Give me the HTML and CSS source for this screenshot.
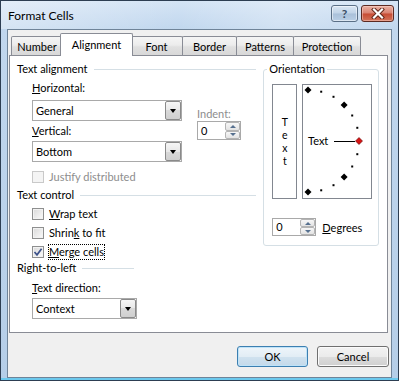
FILE: index.html
```html
<!DOCTYPE html>
<html lang="en">
<head>
    <meta charset="UTF-8">
    <meta name="viewport" content="width=device-width, initial-scale=1.0">
    <title>Format Cells</title>
    <link rel="stylesheet" href="styles.css">
</head>
<body>
    <div class="window">
        <div class="titlebar">
            <span class="title">Format Cells</span>
            <div class="caption-buttons">
                <button class="cap cap-help">?</button>
                <button class="cap cap-close">
                    <svg width="14" height="11" viewBox="0 0 14 11">
                        <path d="M3 1.5 L11 9.5 M11 1.5 L3 9.5" stroke="#5b2216" stroke-width="4" stroke-linecap="square"/>
                        <path d="M3 1.5 L11 9.5 M11 1.5 L3 9.5" stroke="#fff" stroke-width="2.2" stroke-linecap="square"/>
                    </svg>
                </button>
            </div>
        </div>

        <div class="client">
            <div class="tabs">
                <div class="tab tab-number">Number</div>
                <div class="tab tab-alignment active">Alignment</div>
                <div class="tab tab-font">Font</div>
                <div class="tab tab-border">Border</div>
                <div class="tab tab-patterns">Patterns</div>
                <div class="tab tab-protection">Protection</div>
            </div>

            <div class="panel">
                <div class="left-col">
                    <div class="group-head"><span>Text alignment</span><i class="rule"></i></div>

                    <div class="align-row">
                        <div class="align-fields">
                            <label class="field-label"><u>H</u>orizontal:</label>
                            <div class="combo combo-wide"><span class="combo-text">General</span><span class="drop"></span></div>
                            <label class="field-label gap-top"><u>V</u>ertical:</label>
                            <div class="combo combo-wide"><span class="combo-text">Bottom</span><span class="drop"></span></div>
                        </div>
                        <div class="indent">
                            <label class="field-label disabled">Indent:</label>
                            <div class="spin">
                                <span class="spin-text">0</span>
                                <span class="spin-btns"><span class="spin-up"></span><span class="spin-down"></span></span>
                            </div>
                        </div>
                    </div>

                    <div class="check disabled justify"><span class="box"></span><span>Justify distributed</span></div>

                    <div class="group-head control-head"><span>Text control</span><i class="rule"></i></div>
                    <div class="check first-check"><span class="box"></span><span><u>W</u>rap text</span></div>
                    <div class="check"><span class="box"></span><span>Shrin<u>k</u> to fit</span></div>
                    <div class="check">
                        <span class="box checked">
                            <svg width="10" height="10" viewBox="0 0 10 10"><path d="M1.5 5 L4 7.8 L8.6 1.8" fill="none" stroke="#3d528a" stroke-width="1.7"/></svg>
                        </span>
                        <span class="focus"><u>M</u>erge cells</span>
                    </div>

                    <div class="group-head rtl-head"><span>Right-to-left</span><i class="rule short"></i></div>
                    <label class="field-label sub dir-label"><u>T</u>ext direction:</label>
                    <div class="sub">
                        <div class="combo combo-narrow"><span class="combo-text">Context</span><span class="drop"></span></div>
                    </div>
                </div>

                <fieldset class="orientation">
                    <legend>Orientation</legend>
                    <div class="dials">
                        <div class="vertical-text">
                            <span>T</span><span>e</span><span>x</span><span>t</span>
                        </div>
                        <div class="dial">
                            <svg width="68" height="113" viewBox="0 0 68 113">
                                <g fill="#000">
                                    <polygon points="5,1.5 8.5,5 5,8.5 1.5,5"/>
                                    <rect x="17.2" y="5.7" width="2" height="2"/>
                                    <rect x="29.5" y="10.8" width="2" height="2"/>
                                    <polygon points="41.1,16.4 44.6,19.9 41.1,23.4 37.6,19.9"/>
                                    <rect x="48.2" y="29.5" width="2" height="2"/>
                                    <rect x="53.3" y="41.8" width="2" height="2"/>
                                    <rect x="53.3" y="68.2" width="2" height="2"/>
                                    <rect x="48.2" y="80.5" width="2" height="2"/>
                                    <polygon points="41.1,88.6 44.6,92.1 41.1,95.6 37.6,92.1"/>
                                    <rect x="29.5" y="99.2" width="2" height="2"/>
                                    <rect x="17.2" y="104.3" width="2" height="2"/>
                                    <polygon points="5,103.5 8.5,107 5,110.5 1.5,107"/>
                                </g>
                                <text x="5" y="60" class="dial-text">Text</text>
                                <line x1="31" y1="56.5" x2="52" y2="56.5" stroke="#000" stroke-width="1"/>
                                <polygon points="56,52.5 59.5,56 56,59.5 52.5,56" fill="#d81414" stroke="#5a0000" stroke-width="0.6"/>
                            </svg>
                        </div>
                    </div>
                    <div class="degrees">
                        <div class="spin">
                            <span class="spin-text">0</span>
                            <span class="spin-btns"><span class="spin-up"></span><span class="spin-down"></span></span>
                        </div>
                        <label class="degrees-label"><u>D</u>egrees</label>
                    </div>
                </fieldset>
            </div>

            <div class="actions">
                <button class="btn btn-default">OK</button>
                <button class="btn">Cancel</button>
            </div>
        </div>
    </div>
</body>
</html>
```

FILE: styles.css
```css
* {
    margin: 0;
    padding: 0;
    box-sizing: border-box;
}

body {
    font-family: Lato, "Noto Sans", sans-serif;
    font-size: 11px;
    color: #000;
    background: #fff;
}

/* window frame */
.window {
    width: 399px;
    height: 381px;
    display: flex;
    flex-direction: column;
    padding: 0 6px 2px;
    border: 1px solid #2d3e52;
    background:
        linear-gradient(#6cc9ee, #6cc9ee) bottom / 100% 2px no-repeat,
        linear-gradient(to bottom, #d4e4f5 0, #c1d7ee 28px, #b5cee8 100%);
}

.titlebar {
    height: 28px;
    display: flex;
    align-items: center;
    justify-content: space-between;
    margin: 0 -6px;
    padding: 0 4px 0 7px;
    background: linear-gradient(100deg, rgba(255,255,255,0.35) 0, rgba(255,255,255,0) 45%, rgba(255,255,255,0.25) 70%, rgba(255,255,255,0) 100%);
}

.title {
    font-size: 12px;
    color: #000;
}

.caption-buttons {
    display: flex;
    gap: 3px;
    align-self: flex-start;
    margin-top: 4px;
}

.cap {
    height: 17px;
    border: 1px solid #5a6f86;
    border-radius: 3px;
    display: flex;
    align-items: center;
    justify-content: center;
    font-family: Lato, sans-serif;
}

.cap-help {
    width: 27px;
    font-size: 12px;
    font-weight: 700;
    color: #3a4d66;
    background: linear-gradient(#d9e6f3, #c0d3e7 48%, #a9c0d9 52%, #b9cfe6);
    box-shadow: inset 0 0 0 1px rgba(255,255,255,0.5);
}

.cap-close {
    width: 33px;
    border-color: #5c2a22;
    background: linear-gradient(#eab2a4, #d98170 48%, #c74b33 52%, #d2735a);
    box-shadow: inset 0 0 0 1px rgba(255,220,210,0.45);
}

/* client area */
.client {
    flex: 1;
    display: flex;
    flex-direction: column;
    background: #f0f0f0;
    border: 1px solid #6f8499;
}

.tabs {
    display: flex;
    align-items: flex-end;
    padding: 3px 0 0 3px;
}

.tab {
    height: 19px;
    margin-left: -1px;
    display: flex;
    align-items: center;
    justify-content: center;
    border: 1px solid #898c95;
    border-bottom: none;
    border-radius: 2px 2px 0 0;
    background: linear-gradient(#f5f5f5, #ececec 45%, #e0e0e0 55%, #d8d8d8);
}

.tab:first-child {
    margin-left: 0;
}

.tab.active {
    height: 23px;
    margin: 0 -2px -1px -3px;
    padding-bottom: 2px;
    background: #fff;
    position: relative;
    z-index: 1;
}

.tab-number { width: 52px; }
.tab-alignment { width: 73px; }
.tab-font { width: 53px; }
.tab-border { width: 55px; }
.tab-patterns { width: 58px; }
.tab-protection { width: 68px; }

.panel {
    height: 278px;
    margin: 0 3px 0 1px;
    padding: 6px 8px 0 7px;
    display: flex;
    gap: 7px;
    border: 1px solid #898c95;
    background: #fff;
}

.left-col {
    width: 240px;
}

.group-head {
    height: 14px;
    display: flex;
    align-items: center;
    gap: 6px;
    line-height: 14px;
}

.rule {
    flex: 1;
    height: 1px;
    background: #d5dfe5;
}

.rule.short {
    flex: none;
    width: 52px;
}

.field-label {
    display: block;
    height: 14px;
    line-height: 14px;
}

.disabled {
    color: #8d8d8d;
}

.sub {
    padding-left: 15px;
}

.align-row {
    display: flex;
    margin-top: 5px;
    padding-left: 15px;
}

.align-fields .field-label {
    margin-bottom: 5px;
}

.align-fields .gap-top {
    margin-top: 3px;
    margin-bottom: 3px;
}

.combo {
    height: 21px;
    display: flex;
    border: 1px solid #a9a9a9;
    background: #fff;
}

.combo-wide { width: 150px; }
.combo-narrow { width: 105px; }

.combo-text {
    flex: 1;
    padding-left: 3px;
    line-height: 19px;
}

.drop {
    width: 16px;
    border: 1px solid #8a8a8a;
    border-radius: 2px;
    background: linear-gradient(#f6f6f6, #e8e8e8 50%, #d9d9d9 50%, #cfcfcf);
    display: flex;
    align-items: center;
    justify-content: center;
}

.drop::after {
    content: "";
    border-left: 3.5px solid transparent;
    border-right: 3.5px solid transparent;
    border-top: 4px solid #000;
}

.indent {
    margin: 26px 0 0 15px;
}

.spin {
    width: 44px;
    height: 19px;
    display: flex;
    border: 1px solid #a9a9a9;
    background: #fff;
}

.spin-text {
    flex: 1;
    padding-left: 3px;
    line-height: 17px;
}

.spin-btns {
    width: 15px;
    display: flex;
    flex-direction: column;
}

.spin-up,
.spin-down {
    flex: 1;
    display: flex;
    align-items: center;
    justify-content: center;
    border: 1px solid #b4b4b4;
    border-radius: 2px;
    background: linear-gradient(#f7f7f7, #e3e3e3);
}

.spin-up::after {
    content: "";
    border-left: 3px solid transparent;
    border-right: 3px solid transparent;
    border-bottom: 3px solid #56708f;
}

.spin-down::after {
    content: "";
    border-left: 3px solid transparent;
    border-right: 3px solid transparent;
    border-top: 3px solid #56708f;
}

/* checkboxes */
.check {
    height: 14px;
    display: flex;
    align-items: center;
    gap: 5px;
    padding-left: 15px;
    margin-top: 5px;
    line-height: 14px;
}

.check.justify {
    margin-top: 8px;
}

.box {
    width: 12px;
    height: 12px;
    display: flex;
    align-items: center;
    justify-content: center;
    border: 1px solid #8e8f8f;
    background: linear-gradient(135deg, #d9d9d9, #fbfbfb);
    box-shadow: inset 0 0 0 1px #f2f2f2;
}

.check.disabled .box {
    border-color: #c9c9c9;
    background: #f4f4f4;
    box-shadow: none;
}

.focus {
    outline: 1px dotted #000;
}

.control-head {
    margin-top: 4px;
}

.rtl-head {
    margin-top: 2px;
}

.dir-label {
    margin: 6px 0 3px;
}

/* orientation */
.orientation {
    width: 116px;
    align-self: flex-start;
    border: 1px solid #d5dfe5;
    border-radius: 3px;
    padding: 0 0 9px 8px;
}

.orientation legend {
    margin-left: -5px;
    padding: 0 2px;
    height: 14px;
    line-height: 14px;
}

.dials {
    display: flex;
    gap: 5px;
    margin-top: 8px;
}

.vertical-text {
    width: 25px;
    height: 115px;
    display: flex;
    flex-direction: column;
    align-items: center;
    justify-content: center;
    border: 1px solid #828790;
    font-size: 10.5px;
}

.vertical-text span {
    display: block;
    height: 13px;
    line-height: 13px;
}

.dial {
    width: 70px;
    height: 115px;
    border: 1px solid #828790;
}

.dial svg {
    display: block;
}

.dial-text {
    font-family: Lato, "Noto Sans", sans-serif;
    font-size: 11px;
}

.degrees {
    display: flex;
    align-items: center;
    gap: 6px;
    margin-top: 19px;
}

.degrees .spin {
    height: 18px;
}

.degrees .spin-text {
    line-height: 16px;
}

/* dialog buttons */
.actions {
    display: flex;
    justify-content: flex-end;
    gap: 9px;
    margin-top: 13px;
    padding-right: 2px;
}

.btn {
    width: 72px;
    height: 21px;
    font-family: Lato, "Noto Sans", sans-serif;
    font-size: 11px;
    border: 1px solid #707070;
    border-radius: 3px;
    background: linear-gradient(#f3f3f3, #ebebeb 50%, #dddddd 50%, #cfcfcf);
    box-shadow: inset 0 0 0 1px #fbfbfb;
}

.btn-default {
    width: 71px;
    border-color: #3c7fb1;
    background: linear-gradient(#eef5fa, #e2edf5 50%, #d0e2ef 50%, #c4d9ea);
    box-shadow: inset 0 0 0 1px #bfe3f8;
}
```
